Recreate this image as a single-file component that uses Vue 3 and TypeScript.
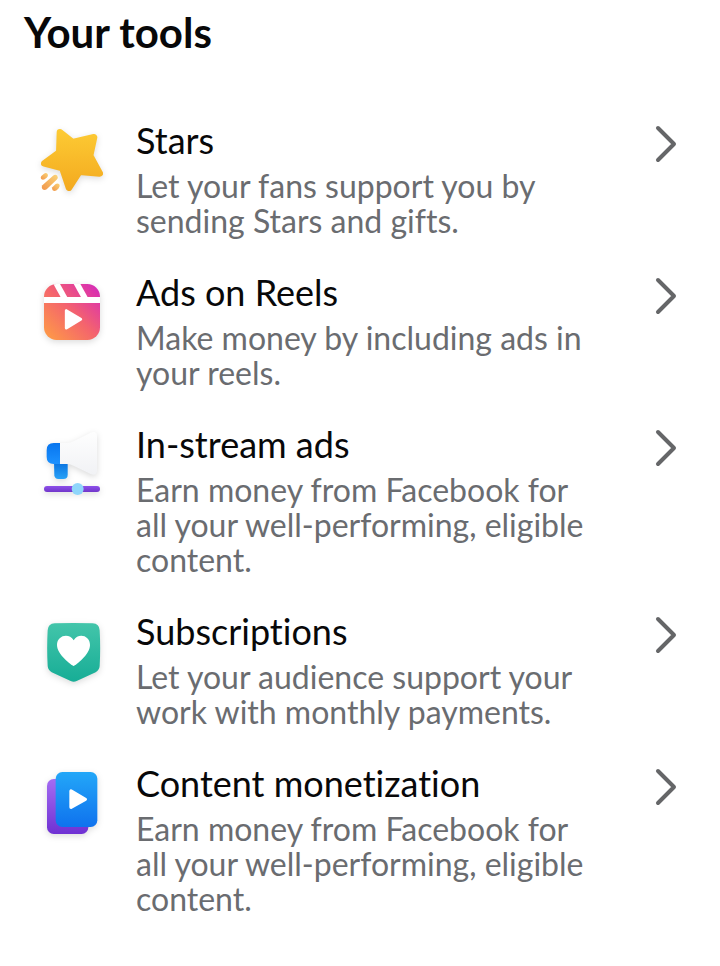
<script setup lang="ts">
type IconName = 'star' | 'reels' | 'instream' | 'subscription' | 'content'

interface Tool {
  icon: IconName
  title: string
  description: string
}

const tools: Tool[] = [
  { icon: 'star', title: 'Stars', description: 'Let your fans support you by sending Stars and gifts.' },
  { icon: 'reels', title: 'Ads on Reels', description: 'Make money by including ads in your reels.' },
  {
    icon: 'instream',
    title: 'In-stream ads',
    description: 'Earn money from Facebook for all your well-performing, eligible content.',
  },
  {
    icon: 'subscription',
    title: 'Subscriptions',
    description: 'Let your audience support your work with monthly payments.',
  },
  {
    icon: 'content',
    title: 'Content monetization',
    description: 'Earn money from Facebook for all your well-performing, eligible content.',
  },
]
</script>

<template>
  <main class="page">
    <h1 class="heading">Your tools</h1>
    <ul class="tools">
      <li v-for="tool in tools" :key="tool.title">
        <a class="tool" href="#">
          <svg v-if="tool.icon === 'star'" class="icon" viewBox="18 18 216 216" aria-hidden="true">
            <defs>
              <linearGradient id="star-fill" gradientUnits="userSpaceOnUse" x1="0" y1="42" x2="0" y2="228">
                <stop offset="0" stop-color="#fdcb34" />
                <stop offset="1" stop-color="#f3a91f" />
              </linearGradient>
              <linearGradient id="star-trail" x1="1" y1="0" x2="0" y2="1">
                <stop offset="0" stop-color="#fbd477" />
                <stop offset="1" stop-color="#f0954a" />
              </linearGradient>
            </defs>
            <g class="shadow">
              <path
                d="M90 52 L128 82 L192 67 L180 122 L209 175 L148 170 L117 218 L97 159 L43 145 L88 112 Z"
                fill="url(#star-fill)" stroke="url(#star-fill)" stroke-width="20" stroke-linejoin="round"
              />
            </g>
            <g fill="url(#star-trail)">
              <path d="M34 183 L42 176 Q48 172 53 177 Q56 183 50 188 L44 193 Q37 196 33 191 Q31 187 34 183 Z" />
              <path d="M37 211 L69 182 Q76 177 82 182 Q86 188 80 194 L50 223 Q43 227 37 222 Q33 216 37 211 Z" />
              <path d="M67 217 L77 207 Q83 203 88 208 Q92 214 86 220 L80 226 Q73 230 68 226 Q65 221 67 217 Z" />
            </g>
          </svg>

          <svg v-else-if="tool.icon === 'reels'" class="icon" viewBox="18 9 216 216" aria-hidden="true">
            <defs>
              <linearGradient id="reels-fill" x1="0" y1="1" x2="1" y2="0">
                <stop offset="0" stop-color="#ff9f43" />
                <stop offset="0.5" stop-color="#f4646d" />
                <stop offset="0.85" stop-color="#df38a5" />
                <stop offset="1" stop-color="#cf28c0" />
              </linearGradient>
              <clipPath id="reels-clip">
                <rect x="42" y="42" width="168" height="168" rx="38" />
              </clipPath>
            </defs>
            <rect class="shadow" x="42" y="42" width="168" height="168" rx="38" fill="url(#reels-fill)" />
            <g clip-path="url(#reels-clip)" fill="#fff">
              <rect x="40" y="81" width="172" height="18" />
              <path d="M69 40 H89 L113 83 H93 Z" />
              <path d="M130 40 H150 L174 83 H154 Z" />
            </g>
            <path d="M109 122 V174 L152 148 Z" fill="#fff" stroke="#fff" stroke-width="9" stroke-linejoin="round" />
          </svg>

          <svg v-else-if="tool.icon === 'instream'" class="icon" viewBox="18 15 216 216" aria-hidden="true">
            <defs>
              <linearGradient id="horn-blue" x1="0" y1="0" x2="0" y2="1">
                <stop offset="0" stop-color="#0875ee" />
                <stop offset="1" stop-color="#1c91ff" />
              </linearGradient>
              <linearGradient id="horn-handle" x1="0" y1="0" x2="0" y2="1">
                <stop offset="0" stop-color="#0870df" />
                <stop offset="1" stop-color="#29a2f7" />
              </linearGradient>
              <linearGradient id="horn-white" x1="0" y1="0" x2="0" y2="1">
                <stop offset="0" stop-color="#fefefe" />
                <stop offset="1" stop-color="#f1f2f5" />
              </linearGradient>
              <linearGradient id="slider-track" x1="0" y1="0" x2="0" y2="1">
                <stop offset="0" stop-color="#8d50ea" />
                <stop offset="1" stop-color="#7136ca" />
              </linearGradient>
            </defs>
            <g class="shadow">
              <path d="M72 126 H113 V164 Q113 177 100 177 H85 Q74 177 73 166 Z" fill="url(#horn-handle)" />
              <path d="M90 69 H71 Q50 69 50 90 V111 Q50 132 71 132 H90 Z" fill="url(#horn-blue)" />
              <path
                d="M90 69 H111 Q122 69 132 63 L182 38 Q201 31 201 49 V151 Q201 169 182 162 L132 138 Q122 132 111 132 H90 Z"
                fill="url(#horn-white)"
              />
              <rect x="42" y="198" width="168" height="18" rx="9" fill="url(#slider-track)" />
            </g>
            <circle cx="143" cy="207" r="18" fill="#8fd6fb" />
          </svg>

          <svg v-else-if="tool.icon === 'subscription'" class="icon" viewBox="18 6 216 216" aria-hidden="true">
            <defs>
              <linearGradient id="badge-fill" x1="0" y1="0" x2="0" y2="1">
                <stop offset="0" stop-color="#43c5aa" />
                <stop offset="1" stop-color="#17ad96" />
              </linearGradient>
            </defs>
            <path
              class="shadow"
              d="M74 40 Q131 38 188 40 Q208 41 209 61 Q212 115 209 168 Q208 180 197 187 L140 213 Q131 218 122 213 L65 187 Q54 180 53 168 Q50 115 53 61 Q54 41 74 40 Z"
              fill="url(#badge-fill)"
            />
            <path
              d="M131 168 C125 166 81 134 81 105 C81 76 117 67 131 91 C145 67 180 76 180 105 C180 134 137 166 131 168 Z"
              fill="#fff"
            />
          </svg>

          <svg v-else class="icon" viewBox="18 12 216 216" aria-hidden="true">
            <defs>
              <linearGradient id="card-back" x1="0" y1="0" x2="0" y2="1">
                <stop offset="0" stop-color="#a46cf2" />
                <stop offset="1" stop-color="#6f31d3" />
              </linearGradient>
              <linearGradient id="card-front" x1="0" y1="0" x2="0" y2="1">
                <stop offset="0" stop-color="#23a7f8" />
                <stop offset="1" stop-color="#0f72ee" />
              </linearGradient>
            </defs>
            <g class="shadow">
              <rect x="51" y="57" width="124" height="165" rx="20" fill="url(#card-back)" />
              <rect x="77" y="36" width="125" height="165" rx="20" fill="url(#card-front)" />
            </g>
            <path d="M123 93 V142 L166 118 Z" fill="#fff" stroke="#fff" stroke-width="10" stroke-linejoin="round" />
          </svg>

          <span class="text">
            <span class="title">{{ tool.title }}</span>
            <span class="description">{{ tool.description }}</span>
          </span>

          <svg class="chevron" viewBox="0 0 28 46" aria-hidden="true">
            <path d="M6 7 L22 23 L6 39" />
          </svg>
        </a>
      </li>
    </ul>
  </main>
</template>

<style>
body {
  margin: 0;
  background: #fff;
}
</style>

<style scoped>
.page {
  padding: 8px 40px 48px 36px;
  font-family: Lato, 'Noto Sans', sans-serif;
  font-variant-ligatures: none;
  color: #080809;
}

.heading {
  margin: 0 0 65px -12px;
  font-size: 42px;
  font-weight: 700;
  line-height: 48px;
}

.tools {
  display: flex;
  flex-direction: column;
  gap: 35px;
  margin: 0;
  padding: 0;
  list-style: none;
}

.tool {
  display: flex;
  align-items: flex-start;
  color: inherit;
  text-decoration: none;
}

.icon {
  flex: none;
  width: 72px;
  height: 72px;
  margin-right: 28px;
  overflow: visible;
}

.shadow {
  filter: drop-shadow(0 6px 9px rgb(0 0 0 / 14%));
}

.text {
  display: flex;
  flex: 1;
  flex-direction: column;
  gap: 9px;
}

.title {
  font-size: 36px;
  line-height: 38px;
}

.description {
  font-size: 32px;
  line-height: 35px;
  color: #6a6c70;
}

.chevron {
  flex: none;
  width: 28px;
  height: 46px;
  margin-left: 56px;
  fill: none;
  stroke: #656668;
  stroke-width: 4;
  stroke-linecap: round;
  stroke-linejoin: round;
}
</style>
